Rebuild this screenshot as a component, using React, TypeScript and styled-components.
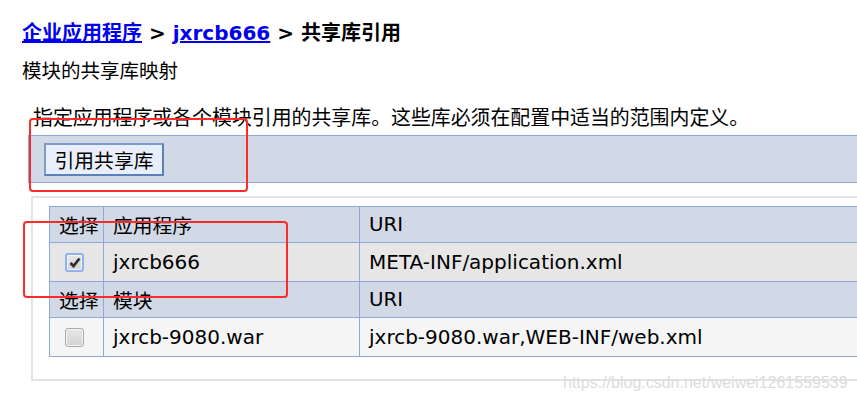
import { styled, createGlobalStyle } from 'styled-components';

const GlobalStyle = createGlobalStyle`
  html, body {
    margin: 0;
    padding: 0;
    background: #fff;
    overflow: hidden;
  }
`;

const Page = styled.div`
  position: relative;
  width: 857px;
  height: 403px;
  overflow: hidden;
  box-sizing: border-box;
  padding: 21px 0 0 22px;
  font-family: 'DejaVu Sans', 'Noto Sans CJK SC', sans-serif;
  color: #000;
`;

const Title = styled.h1`
  margin: 0;
  font-size: 20px;
  line-height: 24px;
  font-weight: bold;
  white-space: nowrap;

  a {
    color: #0000ee;
    text-decoration: underline;
  }
`;

const Sub = styled.div`
  margin-top: 15px;
  font-size: 19.5px;
  line-height: 24px;
`;

const Panel = styled.div`
  margin-left: 6px;
  width: 920px;
`;

const Desc = styled.div`
  margin-top: 23px;
  padding-left: 5px;
  font-size: 19.9px;
  line-height: 24px;
  white-space: nowrap;
`;

const Toolbar = styled.div`
  margin-top: 4px;
  background: #d1d8e6;
  border: 1px solid #8ea9d9;
  border-right: none;
  padding: 7px 0 6px 15px;
  display: flex;
`;

const Button = styled.button`
  width: 120px;
  height: 33px;
  padding: 0;
  background: #e9effa;
  border: 2px solid #5a82b8;
  border-top-color: #7b9ccb;
  border-left-color: #7b9ccb;
  font-family: inherit;
  font-size: 19.8px;
  color: #000;
`;

const Box = styled.div`
  margin: 13px 0 0 3px;
  border: 2px solid #e4e4e4;
  padding: 8px 0 22px 16px;
`;

const Table = styled.table`
  border-collapse: collapse;
  border: 1px solid #8ea9d9;
  table-layout: fixed;
  width: 830px;
  font-size: 19.8px;
`;

const Th = styled.td<{ $w?: number }>`
  background: #d1d8e6;
  border: 1px solid #8ea9d9;
  height: 36px;
  padding: 0 9px;
  text-align: left;
  white-space: nowrap;
  width: ${(p) => (p.$w ? `${p.$w}px` : 'auto')};
  box-sizing: border-box;
`;

const Td = styled.td<{ $bg: string }>`
  background: ${(p) => p.$bg};
  border: 1px solid #8ea9d9;
  height: 38px;
  padding: 0 9px;
  white-space: nowrap;
  font-size: 20px;
`;

const Check = styled.span<{ $on?: boolean }>`
  margin-left: 6px;
  width: 19px;
  height: 19px;
  box-sizing: border-box;
  border-radius: 3px;
  border: ${(p) => (p.$on ? '2px solid #8db2ee' : '1px solid #a9a9a9')};
  background: linear-gradient(#e8e8e8, #d2d2d2);
  box-shadow: inset 0 0 0 1px #f4f4f4;
  display: flex;
  align-items: center;
  justify-content: center;
`;

const Mark = styled.div<{ $x: number; $y: number; $w: number; $h: number }>`
  position: absolute;
  left: ${(p) => p.$x}px;
  top: ${(p) => p.$y}px;
  width: ${(p) => p.$w}px;
  height: ${(p) => p.$h}px;
  border: 2px solid #ff2b2b;
  border-radius: 4px;
  box-sizing: border-box;
  pointer-events: none;
`;

const Watermark = styled.div`
  position: absolute;
  left: 563px;
  top: 374px;
  font-family: 'Liberation Sans', sans-serif;
  font-size: 16px;
  color: #dcdcdc;
  white-space: nowrap;
`;

const CheckBox = ({ on }: { on?: boolean }) => (
  <Check $on={on}>
    {on && (
      <svg width="12" height="11" viewBox="0 0 12 11">
        <path d="M1.5 6 L4.5 9 L10.5 1.5" fill="none" stroke="#2e2e2e" strokeWidth="2.8" />
      </svg>
    )}
  </Check>
);

export default function App() {
  return (
    <>
      <GlobalStyle />
      <Page>
        <Title>
          <a href="#">企业应用程序</a> &gt; <a href="#">jxrcb666</a> &gt; 共享库引用
        </Title>
        <Sub>模块的共享库映射</Sub>
        <Panel>
          <Desc>指定应用程序或各个模块引用的共享库。这些库必须在配置中适当的范围内定义。</Desc>
          <Toolbar>
            <Button>引用共享库</Button>
          </Toolbar>
          <Box>
            <Table>
              <tbody>
                <tr>
                  <Th $w={54}>选择</Th>
                  <Th $w={256}>应用程序</Th>
                  <Th>URI</Th>
                </tr>
                <tr>
                  <Td $bg="#e6e6e6">
                    <CheckBox on />
                  </Td>
                  <Td $bg="#e6e6e6">jxrcb666</Td>
                  <Td $bg="#e6e6e6">META-INF/application.xml</Td>
                </tr>
                <tr>
                  <Th>选择</Th>
                  <Th>模块</Th>
                  <Th>URI</Th>
                </tr>
                <tr>
                  <Td $bg="#f5f5f5">
                    <CheckBox />
                  </Td>
                  <Td $bg="#f5f5f5">jxrcb-9080.war</Td>
                  <Td $bg="#f5f5f5">jxrcb-9080.war,WEB-INF/web.xml</Td>
                </tr>
              </tbody>
            </Table>
          </Box>
        </Panel>
        <Mark $x={29} $y={118} $w={219} $h={74} />
        <Mark $x={23} $y={221} $w={265} $h={77} />
        <Watermark>https://blog.csdn.net/weiwei1261559539</Watermark>
      </Page>
    </>
  );
}
